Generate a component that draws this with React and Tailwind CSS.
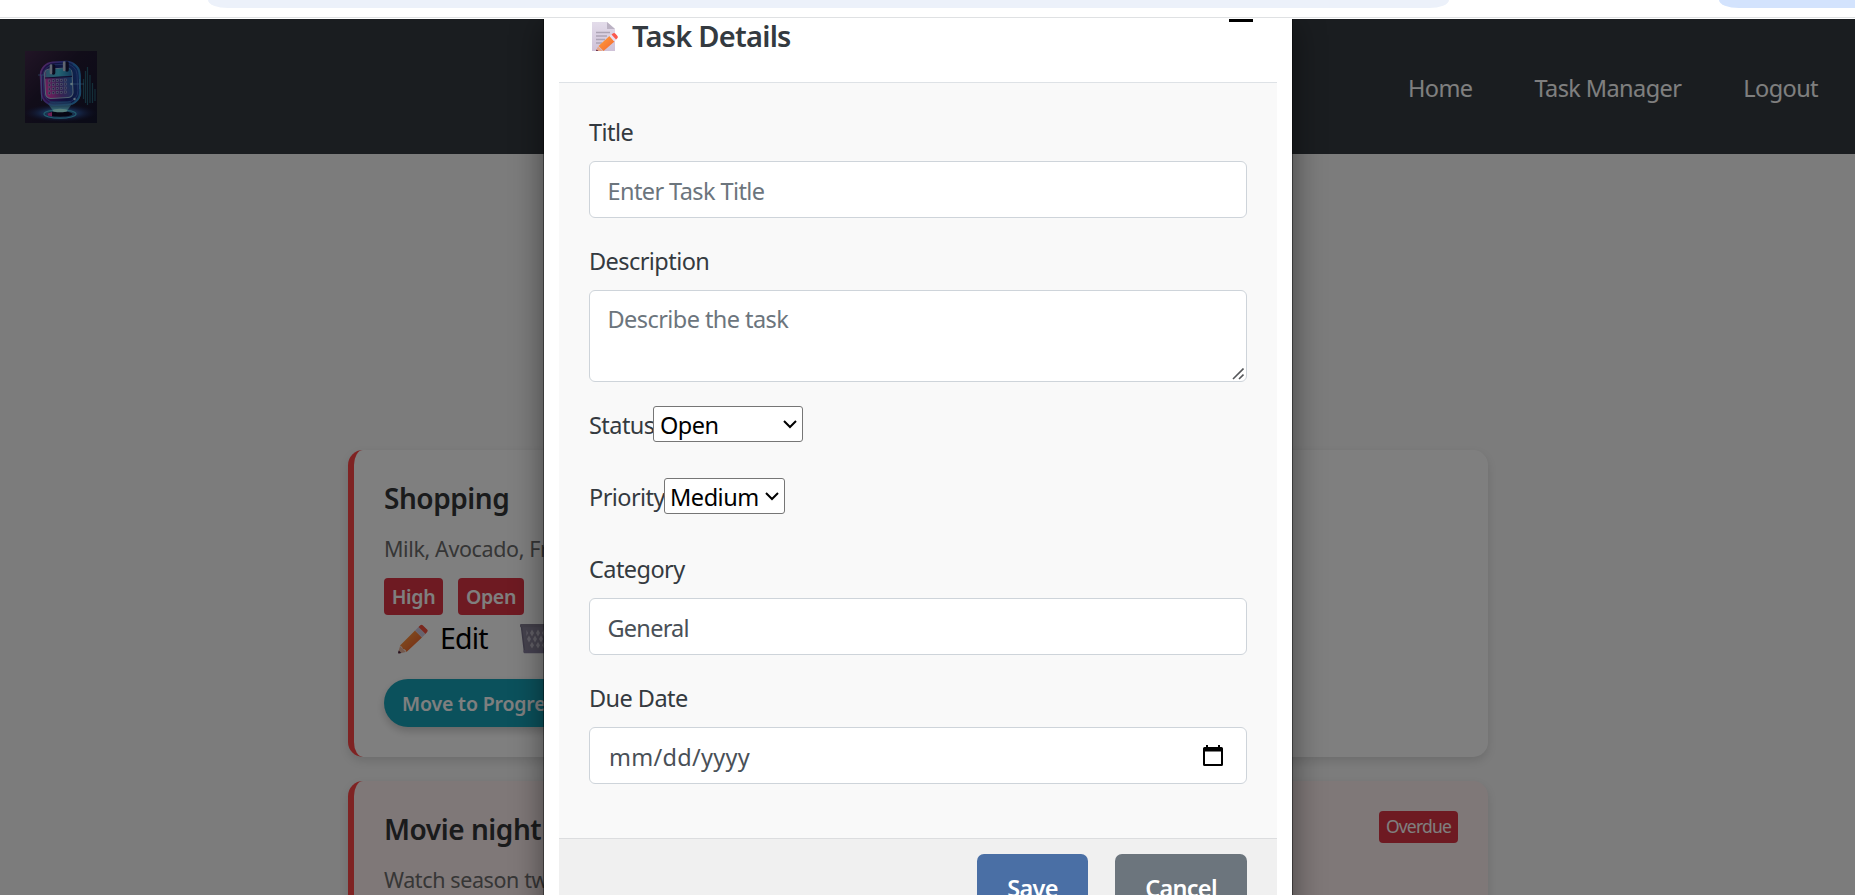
const FONT = "font-['Noto_Sans','Open_Sans',sans-serif]";

function Logo() {
  const cells = [];
  for (let r = 0; r < 4; r++) {
    for (let c = 0; c < 5; c++) cells.push([23.2 + c * 4, 29 + r * 4 - c * 0.25]);
  }
  return (
    <svg className="h-[72px] w-[72px]" viewBox="0 0 72 72" aria-hidden="true">
      <defs>
        <linearGradient id="lg-bg" x1="0" y1="0" x2="1" y2="1">
          <stop offset="0" stopColor="#432a4c" />
          <stop offset=".4" stopColor="#231a33" />
          <stop offset="1" stopColor="#14162e" />
        </linearGradient>
        <linearGradient id="lg-ring" x1="0" y1=".3" x2="1" y2=".6">
          <stop offset="0" stopColor="#9c4cc8" />
          <stop offset=".5" stopColor="#3a4cc0" />
          <stop offset="1" stopColor="#4aa0d8" />
        </linearGradient>
        <linearGradient id="lg-shell" x1="0" y1=".6" x2="1" y2=".3">
          <stop offset="0" stopColor="#5c2496" />
          <stop offset=".5" stopColor="#1e2478" />
          <stop offset="1" stopColor="#1c4aa0" />
        </linearGradient>
        <linearGradient id="lg-face" x1="0" y1=".5" x2="1" y2=".2">
          <stop offset="0" stopColor="#e03cb8" />
          <stop offset=".4" stopColor="#7446a8" />
          <stop offset="1" stopColor="#1b6fb8" />
        </linearGradient>
        <linearGradient id="lg-top" x1="0" y1="0" x2="1" y2="0">
          <stop offset="0" stopColor="#5b9ac8" />
          <stop offset=".5" stopColor="#45c4e4" />
          <stop offset="1" stopColor="#2878b8" />
        </linearGradient>
        <linearGradient id="lg-beam" x1="0" y1="0" x2="0" y2="1">
          <stop offset="0" stopColor="#2470b8" stopOpacity=".5" />
          <stop offset="1" stopColor="#8df4f4" />
        </linearGradient>
        <radialGradient id="lg-floor">
          <stop offset="0" stopColor="#4cc8e8" />
          <stop offset=".5" stopColor="#2f5ca8" stopOpacity=".8" />
          <stop offset="1" stopColor="#1d2050" stopOpacity="0" />
        </radialGradient>
        <filter id="lg-soft" x="-20%" y="-20%" width="140%" height="140%">
          <feGaussianBlur stdDeviation=".4" />
        </filter>
      </defs>
      <rect width="72" height="72" fill="url(#lg-bg)" />
      <ellipse cx="35" cy="62" rx="37" ry="9" fill="url(#lg-floor)" />
      <g filter="url(#lg-soft)">
        <path d="M58.500 28v20M60.500 20v32M62.500 16v38M65 24v28M67.500 32v20M70 38v12" stroke="#2b7688" strokeWidth="1.200" opacity=".75" />
        <rect x="16" y="11" width="39" height="43" rx="13" fill="url(#lg-shell)" stroke="url(#lg-ring)" strokeWidth="1.600" transform="rotate(-3 35 33)" />
        <path d="M48 13q7 3 7 12v16q0 8-8 12" fill="none" stroke="#2c8ad0" strokeWidth="2" opacity=".8" />
        <rect x="18.500" y="13.500" width="34" height="38" rx="11" fill="none" stroke="#4a66c4" strokeWidth=".8" transform="rotate(-3 35 33)" />
        <path d="M26 50h19l2 3-6 8H29l-6-8z" fill="url(#lg-beam)" />
        <rect x="20" y="17.500" width="27.500" height="29.500" rx="5" fill="url(#lg-face)" stroke="#a3c4e0" strokeWidth="1.100" transform="rotate(-3 34 32)" />
        <path d="M20.500 26.500V22q0-3 3-3.300l19-1.700q3.500 0 3.700 3l.3 5z" fill="url(#lg-top)" />
        <path d="M20 27l27-1.600" stroke="#221f60" strokeWidth="1.200" />
        <path d="M28.500 15v7M42 12v7" stroke="#12133e" strokeWidth="3.600" strokeLinecap="round" />
        <path d="M26 14.500v7.500M39.200 11.500v7.500" stroke="#c0cbe0" strokeWidth="2.600" strokeLinecap="round" />
        <ellipse cx="35" cy="63" rx="16" ry="4.200" fill="none" stroke="#45bfe0" strokeWidth="1.200" />
        <ellipse cx="35" cy="63" rx="12.500" ry="2.800" fill="#0d0e26" />
        <path d="M22.500 62.500l4.500-1.500v4.500l-4-1z" fill="#dc40a8" />
        <ellipse cx="35" cy="59.500" rx="7.500" ry="1.800" fill="#aefcf8" />
        <circle cx="46.500" cy="33" r="1.300" fill="#bfeaff" />
        <circle cx="49.500" cy="48" r="1.200" fill="#b8dcf4" />
        <path d="M16.500 24v26M54.500 28v10M48 33h11M13 24h7" stroke="#62a8e4" strokeWidth=".8" opacity=".75" />
      </g>
      {cells.map(([x, y], i) => (
        <rect key={i} x={x} y={y} width="2.100" height="2.100" fill="#4a3f8c" stroke="#b4c6e8" strokeWidth=".5" />
      ))}
    </svg>
  );
}

function MemoIcon() {
  return (
    <svg className="h-[32px] w-[28px]" viewBox="0 0 28 32" aria-hidden="true">
      <defs>
        <linearGradient id="memo-paper" x1="0" y1="0" x2="0" y2="1">
          <stop offset="0" stopColor="#e3dcea" />
          <stop offset="1" stopColor="#cfc2d8" />
        </linearGradient>
        <linearGradient id="memo-pencil" x1="0" y1="0" x2="1" y2="1">
          <stop offset="0" stopColor="#ffa43c" />
          <stop offset="1" stopColor="#f5622f" />
        </linearGradient>
      </defs>
      <path d="M0 2h15l8 7v22H0z" fill="url(#memo-paper)" />
      <path d="M15 2l8 7h-8z" fill="#bbb2c3" />
      <path d="M4 12.500h14M4 16h11M4 19.500h9M4 23h6" stroke="#ada4b5" strokeWidth="1.300" />
      <path d="M6 26.500l4.500 4.500H5l-.8-.8z" fill="#e9a687" />
      <path d="M4.500 29.500l2 1.500H4z" fill="#5c2140" />
      <path d="M17.500 16l5 5.500L11.500 31l-5-5z" fill="url(#memo-pencil)" />
      <path d="M17.500 16l2.500-2 4.500 5.500-2.300 1.900z" fill="#e9dff0" />
      <path d="M19.500 14.500l1.700-1.200q1.200-.8 2.300.4l2 2.400q.9 1.200-.2 2.100l-1.300 1.200z" fill="#fb5a4e" />
    </svg>
  );
}

function PencilIcon() {
  return (
    <svg className="h-[30px] w-[30px]" viewBox="0 0 30 30" aria-hidden="true">
      <defs>
        <linearGradient id="pencil-body" x1="0" y1="0" x2="1" y2="1">
          <stop offset=".2" stopColor="#ff9a3e" />
          <stop offset=".8" stopColor="#f2622c" />
        </linearGradient>
      </defs>
      <path d="M2 22l6 6-7 1.500q-1 0-.8-1z" fill="#e8b29a" />
      <path d="M.8 26.500l2.500 2.500-2.500.6q-.8 0-.7-1z" fill="#4a2340" />
      <path d="M2 21.500L17 6.500l7 7L8.500 28q-1-3-3.500-3-.5-2.500-3-3.500z" fill="url(#pencil-body)" />
      <path d="M17 6.500l3.500-3.500 7 7-3.500 3.500z" fill="#cfc6dd" />
      <path d="M20.500 3l1.800-1.800q1.200-1 2.400 0l4.400 4.400q1.200 1.200 0 2.400L27.500 10z" fill="#f4513f" />
    </svg>
  );
}

function BinIcon() {
  return (
    <svg className="h-[30px] w-[34px] shrink-0" viewBox="0 0 34 30" aria-hidden="true">
      <path d="M1.500 2h31l-3 26.500h-25z" fill="#8d879c" />
      <path
        d="M6.500 6l1.500 3-1.500 3zM12 5.500l2 3.500-2 3.500-2-3.500zM18 5.500l2 3.500-2 3.500-2-3.500zM24 5.500l2 3.500-2 3.500-2-3.500zM9 11.500l2 3.500-2 3.500-2-3.500zM15 11.500l2 3.500-2 3.500-2-3.500zM21 11.500l2 3.500-2 3.500-2-3.500zM27 11.500l1.500 3-1.500 3.500-2-3zM12 18l2 3.300-2 3.300-2-3.300zM18 18l2 3.300-2 3.300-2-3.300zM24 18l2 3.300-2 3.300-2-3.300z"
        fill="#c3bfcc"
      />
      <rect x="0" y="0" width="34" height="3.200" rx="1" fill="#857f93" />
      <path d="M1.500 3l3 25M32.500 3l-3 25" stroke="#77718a" strokeWidth="1.500" />
      <rect x="3.500" y="26" width="27" height="3.200" rx="1" fill="#8b83a3" />
    </svg>
  );
}

function Label({ children }) {
  return <label className="block h-9 text-[23.5px] leading-9 tracking-[-0.024em] text-[#343a40]">{children}</label>;
}

function Select({ value, className, textClass }) {
  return (
    <div className={`flex h-9 items-center justify-between rounded-[3px] border border-[#767676] bg-white pr-[5px] text-black ${className}`}>
      <span className={`pt-px text-[23.5px] leading-8 ${textClass}`}>{value}</span>
      <svg className="h-[9px] w-[14px]" viewBox="0 0 14 9" fill="none" stroke="black" strokeWidth="2" aria-hidden="true">
        <path d="M1 1l6 6 6-6" />
      </svg>
    </div>
  );
}

const INPUT = "w-full rounded-[6px] border border-[#ced4da] bg-white";

function TaskModal() {
  return (
    <div className="absolute top-0 left-[543px] h-[900px] w-[750px] border-x border-black/40 bg-white bg-clip-padding px-[15px] shadow-[0_5px_30px_rgba(0,0,0,0.45)]">
      <div className="flex h-[64px] items-start justify-between border-b border-[#dee2e6] pr-[24px] pl-[33px]">
        <h5 className="flex items-center pt-px text-[29px] leading-8 font-semibold text-[#343a40]">
          <MemoIcon />
          <span className="ml-[12px] tracking-[-0.026em] whitespace-nowrap">Task Details</span>
        </h5>
        <div className="h-[3px] w-6 bg-black" />
      </div>

      <form className="h-[755px] bg-[#f9f9f9] px-[30px] pt-[31px]">
        <Label>Title</Label>
        <div className={`mt-[11px] flex h-[57px] items-center px-[17.5px] pt-[5px] text-[23.5px] tracking-[-0.025em] text-[#6c757d] ${INPUT}`}>
          Enter Task Title
        </div>
        <div className="mt-[25px]">
          <Label>Description</Label>
        </div>
        <div className="relative mt-[11px]">
          <textarea
            className={`block h-[92px] resize-none px-[17.5px] pt-[10px] pb-2 text-[23.5px] leading-9 tracking-[-0.024em] placeholder:text-[#6c757d] ${INPUT}`}
            placeholder="Describe the task"
          />
          <svg className="absolute right-[3px] bottom-[2px] h-3 w-3" viewBox="0 0 12 12" stroke="#55575a" strokeWidth="1.600" aria-hidden="true">
            <path d="M1 11L11.500 .5M7 11l4.500-4.500" />
          </svg>
        </div>
        <div className="mt-6 flex h-9 items-center">
          <div className="w-[64px] pt-0.5 whitespace-nowrap">
            <Label>Status</Label>
          </div>
          <Select value="Open" className="w-[150px] pl-[6px]" textClass="tracking-[-0.022em]" />
        </div>
        <div className="mt-9 flex h-9 items-center">
          <div className="w-[75px] pt-0.5 whitespace-nowrap">
            <Label>Priority</Label>
          </div>
          <Select value="Medium" className="w-[121px] pl-[5px]" textClass="tracking-[-0.02em]" />
        </div>
        <div className="mt-[37px]">
          <Label>Category</Label>
        </div>
        <div className={`mt-[11px] flex h-[57px] items-center px-[17.5px] pt-[5px] text-[23.5px] tracking-[-0.032em] text-[#495057] ${INPUT}`}>
          General
        </div>
        <div className="mt-[25px]">
          <Label>Due Date</Label>
        </div>
        <div className={`mt-[11px] flex h-[57px] items-center justify-between pr-[23px] pl-[19px] text-[23.5px] text-[#495057] ${INPUT}`}>
          <span className="pt-[5px] tracking-[0.012em]">mm/dd/yyyy</span>
          <svg className="h-[21px] w-5" viewBox="0 0 20 21" aria-hidden="true">
            <path d="M3 0h2v2h10V0h2v2h1.500q1.500 0 1.500 1.500v16q0 1.500-1.500 1.500h-17Q0 21 0 19.500v-16Q0 2 1.500 2H3zM2 6.500V19h16V6.500z" fill="black" />
          </svg>
        </div>
      </form>

      <div className="flex justify-end gap-[27px] border-t border-[#dcdddf] bg-[#f0f0f0] px-[30px] pt-[15px] pb-4 text-[23.5px] font-semibold text-white">
        <button className="h-[60px] w-[111px] rounded-[7px] bg-[#4a6fa5] pt-[9px] tracking-[-0.03em]">Save</button>
        <button className="h-[60px] w-[132px] rounded-[7px] bg-[#6c757d] pt-[9px] tracking-[-0.03em]">Cancel</button>
      </div>
    </div>
  );
}

function TaskCard({ title, text, overdue, children, className }) {
  return (
    <article className={`rounded-[15px] border-l-[6px] border-[#ff4747] px-[30px] shadow-[0_4px_10px_rgba(0,0,0,0.12)] ${className}`}>
      <div className="flex h-[67px] items-start justify-between pt-[30px]">
        <h4 className="text-[28px] leading-9 font-semibold tracking-[-0.016em] whitespace-nowrap text-[#343639]">
          {title}
        </h4>
        {overdue && (
          <span className="h-8 w-[79px] rounded bg-[#dc3545] pt-px text-center text-[17.5px] leading-7 tracking-[-0.045em] text-white">
            Overdue
          </span>
        )}
      </div>
      <p className="mt-[16px] text-[21.5px] leading-8 tracking-[-0.018em] text-[#6c6c6c]">{text}</p>
      {children}
    </article>
  );
}

export default function App() {
  return (
    <div className={`flex h-[895px] w-full flex-col overflow-hidden bg-white ${FONT}`}>
      <div className="flex h-[18px] shrink-0 justify-between border-b border-[#dfe1e3] pl-[208px]">
        <div className="h-2 w-[1241px] rounded-b-[20px_8px] bg-[#ecf1fa]" />
        <div className="h-2 w-[136px] rounded-bl-[20px_8px] bg-[#d3e3fd]" />
      </div>

      <div className="relative mt-px flex-1 overflow-hidden bg-[#f8f8f8]">
        <header className="flex h-[135px] items-center justify-between bg-[#343a40] pr-[37px] pl-[25px]">
          <Logo />
          <nav className="flex gap-[62px] pt-[5px] text-[23.5px] tracking-[-0.025em] text-white">
            <a>Home</a>
            <a>Task Manager</a>
            <a>Logout</a>
          </nav>
        </header>

        <main className="ml-[348px] flex w-[1140px] flex-col gap-6 pt-[296px]">
          <TaskCard title="Shopping" text="Milk, Avocado, Fruits" className="h-[307px] bg-white">
            <div className="mt-[13px] flex gap-[15px] text-[19.5px] leading-[37px] font-semibold tracking-[-0.015em] text-white">
              <span className="h-[37px] w-[59px] rounded bg-[#dc3545] text-center">High</span>
              <span className="h-[37px] w-[66px] rounded bg-[#dc3545] text-center">Open</span>
            </div>
            <div className="mt-[9px] flex h-[30px] items-center pl-[14px] text-[28.5px] leading-8 text-black">
              <PencilIcon />
              <span className="mr-[32px] ml-[12px] w-[48px] pb-0.5 tracking-[-0.03em]">Edit</span>
              <BinIcon />
            </div>
            <button className="mt-[25px] block h-12 rounded-full bg-[#17a2b8] px-[18px] pt-0.5 text-[19.5px] font-semibold tracking-[-0.008em] text-white shadow-[0_4px_8px_rgba(0,0,0,0.2)]">
              Move to Progress
            </button>
          </TaskCard>
          <TaskCard title="Movie night" text="Watch season two" overdue className="h-[307px] bg-[#fff0f0]" />
        </main>

        <div className="absolute inset-0 bg-black/50">
          <TaskModal />
        </div>
      </div>
    </div>
  );
}
